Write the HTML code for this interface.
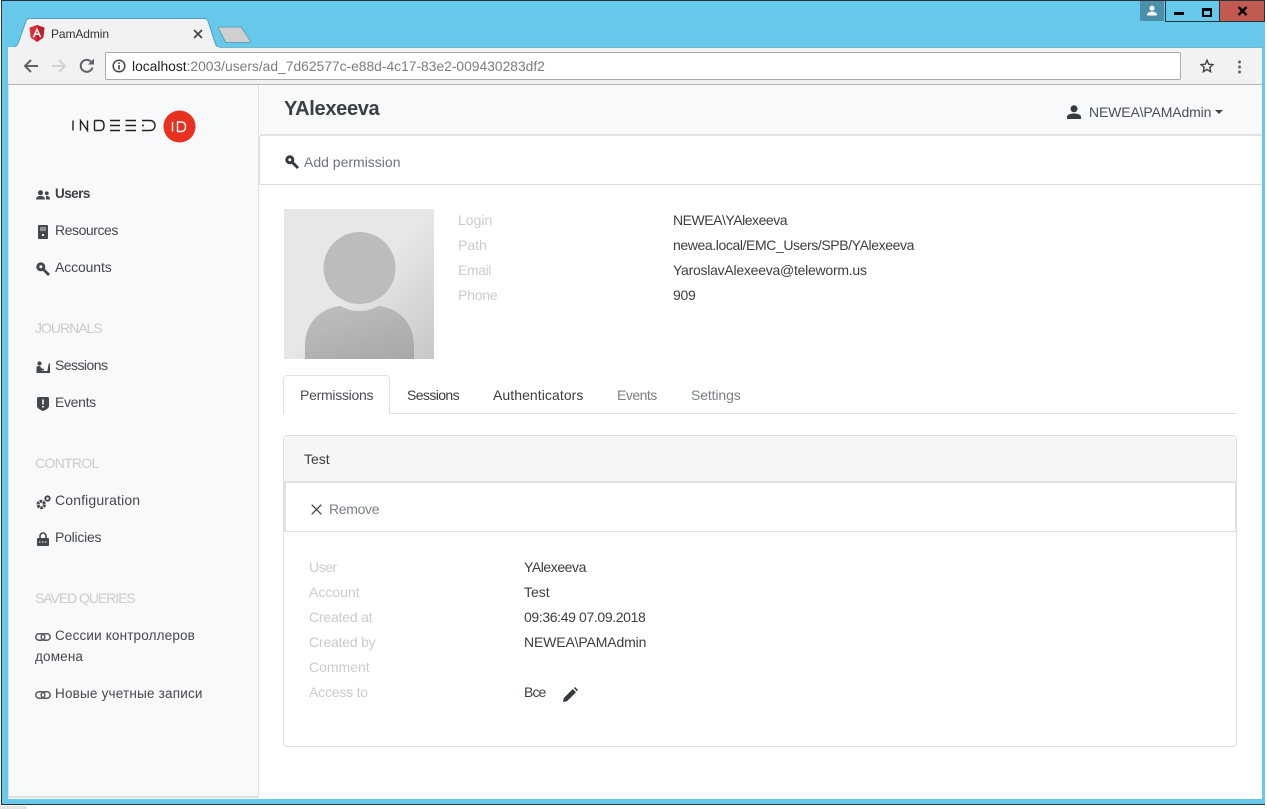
<!DOCTYPE html>
<html><head><meta charset="utf-8"><title>PamAdmin</title>
<style>
html,body{margin:0;padding:0;width:1267px;height:809px;overflow:hidden;background:#fff;font-family:"Liberation Sans","Noto Sans CJK SC",sans-serif;font-size:14px;color:#343a40}
.a{position:absolute;white-space:nowrap}
.t{position:absolute;white-space:nowrap;line-height:20px}
.m{color:#c9cbce}
.d{color:#3a3f44}
.s{color:#43484d}
svg{position:absolute;display:block}
</style></head><body>
<!-- window frame -->
<div class="a" style="left:1px;top:0;width:1264px;height:805px;background:#66c9ec;border:1px solid #2a3338;border-right:none;box-sizing:border-box"></div>
<div class="a" style="left:0;top:806px;width:27px;height:3px;background:#e4e4e4"></div>
<div class="a" style="left:1265px;top:0;width:2px;height:806px;background:#fff"></div>
<!-- caption buttons -->
<div class="a" style="left:1140px;top:1px;width:24px;height:20px;background:#4a90a9"></div>
<svg style="left:1146px;top:5px" width="12" height="11" viewBox="0 0 12 11"><circle cx="6" cy="3.2" r="2.6" fill="#fff"/><path d="M1 10.500C1 7.500 3 6.600 6 6.600s5 .9 5 3.900z" fill="#fff"/></svg>
<div class="a" style="left:1165px;top:1px;width:29px;height:20px;background:#66c9ec;border:1px solid #24323a;border-top:none"></div>
<div class="a" style="left:1174px;top:12px;width:10px;height:3px;background:#000"></div>
<div class="a" style="left:1194px;top:1px;width:25px;height:20px;background:#66c9ec;border:1px solid #24323a;border-left:none;border-top:none"></div>
<div class="a" style="left:1202px;top:8px;width:6px;height:4px;border:2px solid #000;border-top-width:3px"></div>
<div class="a" style="left:1220px;top:1px;width:45px;height:21px;background:#c35a50;border-bottom:1px solid #24323a;border-right:1px solid #24323a;box-sizing:border-box"></div>
<svg style="left:1237px;top:6px" width="11" height="10" viewBox="0 0 11 10"><path d="M1.500 1l8 8M9.500 1l-8 8" stroke="#000" stroke-width="2.400" fill="none"/></svg>
<!-- tab strip -->
<svg style="left:8px;top:18px" width="250" height="30" viewBox="0 0 250 30">
<path d="M0 29.500V30H212C210 30 208.500 28 207.500 26L200 3C199.200 1 197.500 .5 196 .5H22C20 .5 18.700 1.500 18 3L11 23C10 26 8 29 5 29.500H0z" fill="#f2f2f2" stroke="#4d9fba" stroke-width="1"/>
<path d="M210.500 10.500C210 9.500 210.500 9 211.500 9H232C232.800 9 233.300 9.300 233.800 10L242.500 23C243 24 242.500 24.500 241.500 24.500H219C218 24.500 217.300 24 217 23z" fill="#cfcfcf" stroke="#5aa3bb"/>
</svg>
<svg style="left:29px;top:25px" width="16" height="17" viewBox="0 0 16 17"><path d="M8 0L15.500 2.600L14.300 12.600L8 17L1.700 12.600L.5 2.600z" fill="#dd2e38"/><path d="M8 0L15.500 2.600L14.300 12.600L8 17z" fill="#c11f2c"/><path d="M8 2.500L3.600 12.300H5.300L6.200 10H9.800L10.700 12.300H12.400zM6.900 8.500L8 5.800L9.100 8.500z" fill="#fff"/></svg>
<div class="t" style="left:51px;top:24px;font-size:12px;color:#333;letter-spacing:-.1px">PamAdmin</div>
<svg style="left:193px;top:29px" width="10" height="10" viewBox="0 0 10 10"><path d="M1 1l8 8M9 1l-8 8" stroke="#444" stroke-width="1.700" fill="none"/></svg>
<!-- toolbar -->
<div class="a" style="left:8px;top:47px;width:1254px;height:38px;background:#f2f2f2;border-bottom:1px solid #b5b5b5;box-sizing:border-box"></div>
<div class="a" style="left:219px;top:47px;width:1043px;height:1px;background:#76b5ca"></div>
<svg style="left:23px;top:58px" width="16" height="16" viewBox="0 0 16 16"><path d="M15 8H2M8 2L2 8l6 6" stroke="#5f6368" stroke-width="2" fill="none"/></svg>
<svg style="left:51px;top:58px" width="16" height="16" viewBox="0 0 16 16"><path d="M1 8h13M8 2l6 6-6 6" stroke="#d0d2d4" stroke-width="2" fill="none"/></svg>
<svg style="left:79px;top:58px" width="16" height="16" viewBox="0 0 16 16"><path d="M13.500 9.500A6 6 0 1 1 12.200 3.800" stroke="#5f6368" stroke-width="2" fill="none"/><path d="M9 6.500H15V.5z" fill="#5f6368"/></svg>
<div class="a" style="left:105px;top:52px;width:1076px;height:28px;background:#fff;border:1px solid #ababab;border-radius:2px;box-sizing:border-box"></div>
<svg style="left:112px;top:59px" width="14" height="14" viewBox="0 0 14 14"><circle cx="7" cy="7" r="5.800" stroke="#444" stroke-width="1.500" fill="none"/><path d="M7 6v4.500M7 3.500v1.500" stroke="#444" stroke-width="1.600"/></svg>
<div class="t" style="left:132px;top:56px;font-size:13.840px"><span style="color:#222">localhost</span><span style="color:#7d7d7d">:2003/users/ad_7d62577c-e88d-4c17-83e2-009430283df2</span></div>
<svg style="left:1200px;top:59px" width="14" height="14" viewBox="0 0 14 14"><path d="M7 1.200L8.700 5.200L13 5.600L9.800 8.400L10.700 12.700L7 10.500L3.300 12.700L4.200 8.400L1 5.600L5.300 5.200z" stroke="#444" stroke-width="1.400" fill="none"/></svg>
<svg style="left:1237px;top:60px" width="5" height="14" viewBox="0 0 5 14"><circle cx="2.500" cy="2" r="1.500" fill="#666"/><circle cx="2.500" cy="7" r="1.500" fill="#666"/><circle cx="2.500" cy="12" r="1.500" fill="#666"/></svg>
<!-- app bg -->
<div class="a" style="left:8px;top:85px;width:1254px;height:714px;background:#fff"></div>
<div class="a" style="left:8px;top:85px;width:251px;height:713px;background:#f8f9fb;border-right:1px solid #dee2e6;border-left:1px solid #dcdfe2;border-bottom:2px solid #dce0e3;box-sizing:border-box"></div>
<!-- logo -->
<svg style="left:71px;top:119px" width="86" height="14" viewBox="0 0 86 14"><g stroke="#222" stroke-width="1.400" fill="none"><path d="M2 1.500v10"/><path d="M9.500 11.500V1.500L16.500 11.500V1.500"/><path d="M23.500 1.500v10M23.500 1.500h5.500c2.500 0 4 1.800 4 5s-1.500 5-4 5h-5.500"/><path d="M39 1.500h10M39 6.500h10M39 11.500h10"/><path d="M54.500 1.500h10.500M54.500 6.500h10.500M54.500 11.500h10.500"/><path d="M71 1.500h8c3 0 5 2 5 5s-2 5-5 5h-8M71 6.500h2"/></g></svg>
<svg style="left:163px;top:110px" width="33" height="33" viewBox="0 0 33 33"><circle cx="16.500" cy="16.500" r="16" fill="#e7301f"/><path d="M9.500 12v9.500M14.500 12h3.500c3 0 4.500 1.800 4.500 4.700S21 21.500 18 21.500h-3.500z" stroke="#fff" stroke-width="1.400" fill="none"/></svg>
<!-- sidebar -->
<svg style="left:36px;top:190px" width="14" height="10" viewBox="0 0 14 10"><circle cx="4.500" cy="2.800" r="2.500" fill="#43484d"/><path d="M0 9.500C0 6.800 2 6 4.500 6S9 6.800 9 9.500z" fill="#43484d"/><circle cx="10.800" cy="3.300" r="1.900" fill="#43484d"/><path d="M10 6C12.500 5.700 14 7 14 9.500H10z" fill="#43484d"/></svg>
<div class="t" style="left:55px;top:184px;font-weight:bold;color:#3d4246;font-size:13.500px;letter-spacing:-.55px">Users</div>
<svg style="left:38px;top:225px" width="10" height="14" viewBox="0 0 10 14"><path d="M1 0h8a1 1 0 0 1 1 1v12a1 1 0 0 1-1 1H1a1 1 0 0 1-1-1V1a1 1 0 0 1 1-1z" fill="#43484d"/><path d="M2 2h6v4H2z" fill="#8d9093"/><rect x="4" y="9" width="2" height="2" fill="#eee"/></svg>
<div class="t s" style="left:55px;top:220px;letter-spacing:-.44px">Resources</div>
<svg style="left:36px;top:262px" width="14" height="14" viewBox="0 0 14 14"><circle cx="4.800" cy="4.800" r="3" stroke="#43484d" stroke-width="3" fill="none"/><path d="M7 7l6 6" stroke="#43484d" stroke-width="2.800"/></svg>
<div class="t s" style="left:55px;top:257px;letter-spacing:-.12px">Accounts</div>
<div class="t m" style="left:35px;top:318px;letter-spacing:-1px">JOURNALS</div>
<svg style="left:36px;top:361px" width="14" height="12" viewBox="0 0 14 12"><circle cx="3.500" cy="2.500" r="2.100" fill="#43484d"/><path d="M.5 12V6.500C.5 5.300 2 5 3.500 5L6 7.500 8 8V9.500H5.500V12z" fill="#43484d"/><path d="M5.500 12H14V2.500L12.800 2.500 11.300 10H5.500z" fill="#43484d"/></svg>
<div class="t s" style="left:55px;top:355px;letter-spacing:-.55px">Sessions</div>
<svg style="left:37px;top:397px" width="12" height="14" viewBox="0 0 12 14"><path d="M1.500 0h9A1.500 1.500 0 0 1 12 1.500V9C12 11 9 13 6 14 3 13 0 11 0 9V1.500A1.500 1.500 0 0 1 1.500 0z" fill="#43484d"/><path d="M5.200 2.500h1.600v5H5.200zM5.200 9h1.600v1.600H5.200z" fill="#f8f9fb"/></svg>
<div class="t s" style="left:55px;top:392px;letter-spacing:-.33px">Events</div>
<div class="t m" style="left:35px;top:453px;letter-spacing:-.7px">CONTROL</div>
<svg style="left:36px;top:495px" width="15" height="15" viewBox="0 0 15 15"><circle cx="5.200" cy="9.500" r="3.200" stroke="#43484d" stroke-width="3" fill="none" stroke-dasharray="2.500 .8"/><circle cx="11.500" cy="3.500" r="2.200" stroke="#43484d" stroke-width="1.900" fill="none"/></svg>
<div class="t s" style="left:55px;top:490px;letter-spacing:.15px">Configuration</div>
<svg style="left:37px;top:532px" width="12" height="14" viewBox="0 0 12 14"><path d="M3 6V4a3 3 0 0 1 6 0v2" stroke="#43484d" stroke-width="1.600" fill="none"/><rect x="0" y="6" width="12" height="8" rx="1" fill="#43484d"/><path d="M2 10h8" stroke="#ddd" stroke-width="1.200" stroke-dasharray="1.500 1.500"/></svg>
<div class="t s" style="left:55px;top:527px;letter-spacing:-.25px">Policies</div>
<div class="t m" style="left:35px;top:588px;letter-spacing:-1.050px">SAVED QUERIES</div>
<svg style="left:35px;top:633px" width="16" height="8" viewBox="0 0 16 8"><rect x=".8" y=".8" width="9" height="6.400" rx="3.200" stroke="#55595d" stroke-width="1.500" fill="none"/><rect x="6.200" y=".8" width="9" height="6.400" rx="3.200" stroke="#55595d" stroke-width="1.500" fill="none"/></svg>
<div class="t s" style="left:55px;top:626px;font-size:13.500px;letter-spacing:.16px">Сессии контроллеров</div>
<div class="t s" style="left:35px;top:647px;font-size:13.500px;letter-spacing:.16px">домена</div>
<svg style="left:35px;top:691px" width="16" height="8" viewBox="0 0 16 8"><rect x=".8" y=".8" width="9" height="6.400" rx="3.200" stroke="#55595d" stroke-width="1.500" fill="none"/><rect x="6.200" y=".8" width="9" height="6.400" rx="3.200" stroke="#55595d" stroke-width="1.500" fill="none"/></svg>
<div class="t s" style="left:55px;top:684px;font-size:13.500px;letter-spacing:.2px">Новые учетные записи</div>
<!-- header -->
<div class="a" style="left:260px;top:85px;width:1002px;height:51px;background:#f8f9fb;border-bottom:2px solid #e1e3e6;box-sizing:border-box"></div>
<div class="t" style="left:284px;top:97px;font-size:20px;font-weight:bold;color:#3a3f44;line-height:24px;letter-spacing:-.32px">YAlexeeva</div>
<svg style="left:1067px;top:105px" width="14" height="14" viewBox="0 0 14 14"><circle cx="7" cy="3.800" r="3.500" fill="#343a40"/><path d="M0 14V12C0 9.500 3.500 8.500 7 8.500S14 9.500 14 12V14z" fill="#343a40"/></svg>
<div class="t" style="left:1089px;top:102px;color:#495057;letter-spacing:-.14px">NEWEA\PAMAdmin</div>
<div class="a" style="left:1215px;top:110px;width:0;height:0;border-left:4px solid transparent;border-right:4px solid transparent;border-top:4px solid #444"></div>
<!-- action bar -->
<div class="a" style="left:259px;top:136px;width:1003px;height:49px;background:#fff;border-bottom:1px solid #dcdde0;border-left:1px solid #dcdde0;box-sizing:border-box"></div>
<svg style="left:285px;top:155px" width="14" height="14" viewBox="0 0 14 14"><circle cx="4.800" cy="4.800" r="3" stroke="#343a40" stroke-width="3" fill="none"/><path d="M7 7l6 6" stroke="#343a40" stroke-width="2.800"/></svg>
<div class="t" style="left:304px;top:152px;color:#6c757d">Add permission</div>
<!-- avatar -->
<svg style="left:284px;top:209px" width="150" height="150" viewBox="0 0 150 150"><defs><linearGradient id="g" x1="0.300" y1="0.300" x2="1" y2="1"><stop offset="0.300" stop-color="#e6e7e9"/><stop offset="1" stop-color="#c6c7c9"/></linearGradient><linearGradient id="h" x1="0.300" y1="0" x2="1" y2="1"><stop offset="0" stop-color="#bcbdbf"/><stop offset="1" stop-color="#a6a7a9"/></linearGradient></defs><rect width="150" height="150" fill="url(#g)"/><circle cx="75.500" cy="59" r="36" fill="#bbbcbe"/><path d="M21 150V137C21 115 35 99 57 97C62 100 68 102 75.500 102S89 100 94 97C116 99 130 115 130 137V150z" fill="url(#h)"/></svg>
<!-- info -->
<div class="t m" style="left:458px;top:210px">Login</div>
<div class="t m" style="left:458px;top:235px">Path</div>
<div class="t m" style="left:458px;top:260px;letter-spacing:-.4px">Email</div>
<div class="t m" style="left:458px;top:285px;letter-spacing:-.2px">Phone</div>
<div class="t d" style="left:673px;top:210px;letter-spacing:-.47px">NEWEA\YAlexeeva</div>
<div class="t d" style="left:673px;top:235px;letter-spacing:-.4px">newea.local/EMC_Users/SPB/YAlexeeva</div>
<div class="t d" style="left:673px;top:260px;letter-spacing:-.25px">YaroslavAlexeeva@teleworm.us</div>
<div class="t d" style="left:673px;top:285px;letter-spacing:-.3px">909</div>
<!-- tabs -->
<div class="a" style="left:284px;top:413px;width:953px;height:1px;background:#dee2e6"></div>
<div class="a" style="left:283px;top:375px;width:107px;height:39px;background:#fff;border:1px solid #dee2e6;border-bottom:none;border-radius:4px 4px 0 0;box-sizing:border-box"></div>
<div class="t" style="left:300px;top:385px;color:#495057;letter-spacing:-.27px">Permissions</div>
<div class="t d" style="left:407px;top:385px;letter-spacing:-.6px">Sessions</div>
<div class="t d" style="left:493px;top:385px;letter-spacing:.07px">Authenticators</div>
<div class="t" style="left:617px;top:385px;color:#7a8086;letter-spacing:-.5px">Events</div>
<div class="t" style="left:691px;top:385px;color:#7a8086;letter-spacing:-.12px">Settings</div>
<!-- card -->
<div class="a" style="left:283px;top:435px;width:954px;height:312px;background:#fff;border:1px solid #dfdfdf;border-radius:4px;box-sizing:border-box"></div>
<div class="a" style="left:284px;top:436px;width:952px;height:47px;background:#f6f6f6;border-bottom:2px solid #e0e1e3;box-sizing:border-box"></div>
<div class="t d" style="left:304px;top:449px">Test</div>
<div class="a" style="left:284px;top:483px;width:952px;height:49px;background:#fff;border:1px solid #e0e1e3;border-top:none;border-left-width:2px;box-sizing:border-box"></div>
<svg style="left:311px;top:504px" width="11" height="11" viewBox="0 0 11 11"><path d="M.7.7l9.600 9.600M10.300.7L.7 10.300" stroke="#444" stroke-width="1.300" fill="none"/></svg>
<div class="t" style="left:329px;top:499px;color:#7a8086;letter-spacing:-.33px">Remove</div>
<div class="t m" style="left:309px;top:557px;letter-spacing:-.5px">User</div>
<div class="t m" style="left:309px;top:582px">Account</div>
<div class="t m" style="left:309px;top:607px;letter-spacing:-.2px">Created at</div>
<div class="t m" style="left:309px;top:632px;letter-spacing:-.2px">Created by</div>
<div class="t m" style="left:309px;top:657px">Comment</div>
<div class="t m" style="left:309px;top:682px;letter-spacing:-.2px">Access to</div>
<div class="t d" style="left:524px;top:557px;letter-spacing:-.44px">YAlexeeva</div>
<div class="t d" style="left:524px;top:582px">Test</div>
<div class="t d" style="left:524px;top:607px;letter-spacing:-.37px">09:36:49 07.09.2018</div>
<div class="t d" style="left:524px;top:632px;letter-spacing:-.14px">NEWEA\PAMAdmin</div>
<div class="t d" style="left:524px;top:682px;letter-spacing:-.9px">Все</div>
<svg style="left:563px;top:687px" width="15" height="15" viewBox="0 0 15 15"><path d="M0 15L.8 11 9.800 2 13 5.200 4 14.200zM10.800 1L12 0 15 3 13.900 4.200z" fill="#343a40"/></svg>
</body></html>
